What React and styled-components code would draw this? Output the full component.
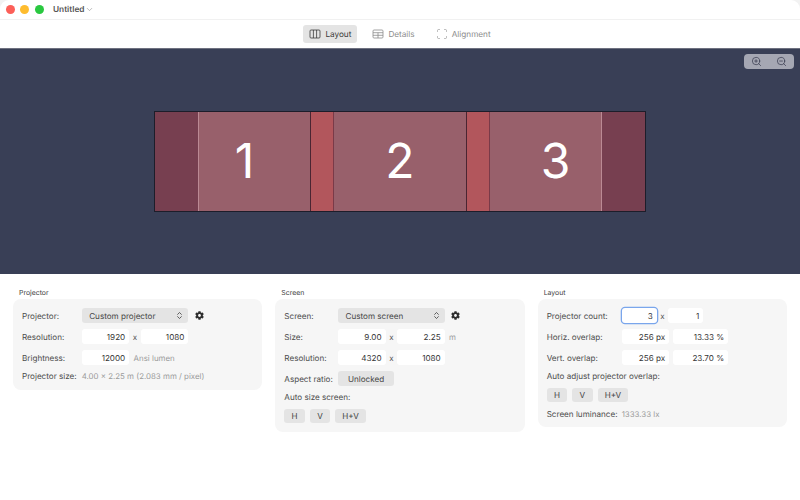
import React from "react";
import styled, { createGlobalStyle } from "styled-components";
import { Scan, ZoomIn, ZoomOut, ChevronDown, ChevronsUpDown } from "lucide-react";
import { FaCog } from "react-icons/fa";

const GlobalStyle = createGlobalStyle`
  html, body {
    margin: 0;
    padding: 0;
    height: 100%;
    background: #f2f2f2;
    font-family: "Inter", "Liberation Sans", sans-serif;
    color: #3a3a3a;
    text-rendering: geometricPrecision;
  }
`;

function ColumnsIcon() {
  return (
    <TabIcon viewBox="0 0 12 10">
      <rect x="1" y="1" width="10" height="8" rx="1" />
      <path d="M4.4 1v8M7.6 1v8" />
    </TabIcon>
  );
}

function TableIcon() {
  return (
    <TabIcon viewBox="0 0 12 10">
      <rect x="1" y="1" width="10" height="8" rx="1" />
      <path d="M1 3.7h10M1 6.3h10M6 3.7v5.3" />
    </TabIcon>
  );
}

export default function App() {
  return (
    <Window>
      <GlobalStyle />
      <TitleBar>
        <Light color="#fc5f58" />
        <Light color="#febc2e" />
        <Light color="#29c840" />
        <DocTitle>Untitled</DocTitle>
        <ChevronDown size={9} color="#8a8a8a" strokeWidth={1.5} />
      </TitleBar>

      <Toolbar>
        <Tab $active>
          <ColumnsIcon />
          Layout
        </Tab>
        <Tab>
          <TableIcon />
          Details
        </Tab>
        <Tab>
          <Scan size={12} strokeWidth={1.2} />
          Alignment
        </Tab>
      </Toolbar>

      <Canvas>
        <ZoomGroup>
          <ZoomIn size={11} strokeWidth={1.5} />
          <ZoomOut size={11} strokeWidth={1.5} />
        </ZoomGroup>
        <Stage>
          <Edge $col={1} />
          <Beam $col={2} $left />
          <Overlap $col={3} />
          <Beam $col={4} />
          <Overlap $col={5} />
          <Beam $col={6} $right />
          <Edge $col={7} />
          <BeamNumber $from={1} $to={4}>1</BeamNumber>
          <BeamNumber $from={3} $to={6}>2</BeamNumber>
          <BeamNumber $from={5} $to={8}>3</BeamNumber>
        </Stage>
      </Canvas>

      <Panels>
        <Section>
          <SectionTitle>Projector</SectionTitle>
          <Card $labelWidth={59.7}>
            <Row>
              <Label>Projector:</Label>
              <Select>
                Custom projector
                <ChevronsUpDown size={9} color="#333" strokeWidth={2} />
              </Select>
              <Gear />
            </Row>
            <Row>
              <Label>Resolution:</Label>
              <Field>1920</Field>
              <Times>x</Times>
              <Field>1080</Field>
            </Row>
            <Row>
              <Label>Brightness:</Label>
              <Field>12000</Field>
              <Unit>Ansi lumen</Unit>
            </Row>
            <InfoRow>
              <Label>Projector size:</Label>
              <Value>4.00 x 2.25 m (2.083 mm / pixel)</Value>
            </InfoRow>
          </Card>
        </Section>

        <Section>
          <SectionTitle>Screen</SectionTitle>
          <Card $labelWidth={53.7}>
            <Row>
              <Label>Screen:</Label>
              <Select>
                Custom screen
                <ChevronsUpDown size={9} color="#333" strokeWidth={2} />
              </Select>
              <Gear />
            </Row>
            <Row>
              <Label>Size:</Label>
              <Field>9.00</Field>
              <Times>x</Times>
              <Field>2.25</Field>
              <Unit>m</Unit>
            </Row>
            <Row>
              <Label>Resolution:</Label>
              <Field>4320</Field>
              <Times>x</Times>
              <Field>1080</Field>
            </Row>
            <Row>
              <Label>Aspect ratio:</Label>
              <Button $wide>Unlocked</Button>
            </Row>
            <InfoRow>
              <Label>Auto size screen:</Label>
            </InfoRow>
            <ButtonRow>
              <Button>H</Button>
              <Button>V</Button>
              <Button>H+V</Button>
            </ButtonRow>
          </Card>
        </Section>

        <Section>
          <SectionTitle>Layout</SectionTitle>
          <Card $labelWidth={75}>
            <Row>
              <Label>Projector count:</Label>
              <Field $focus $small>3</Field>
              <Times>x</Times>
              <Field $small>1</Field>
            </Row>
            <Row>
              <Label>Horiz. overlap:</Label>
              <Field>256 px</Field>
              <Field $large>13.33 %</Field>
            </Row>
            <Row>
              <Label>Vert. overlap:</Label>
              <Field>256 px</Field>
              <Field $large>23.70 %</Field>
            </Row>
            <InfoRow>
              <Label>Auto adjust projector overlap:</Label>
            </InfoRow>
            <ButtonRow>
              <Button>H</Button>
              <Button>V</Button>
              <Button>H+V</Button>
            </ButtonRow>
            <InfoRow>
              <Label>Screen luminance:</Label>
              <Value>1333.33 lx</Value>
            </InfoRow>
          </Card>
        </Section>
      </Panels>
    </Window>
  );
}

const Window = styled.div`
  width: 800px;
  height: 500px;
  display: flex;
  flex-direction: column;
  background: #ffffff;
  border-radius: 9px 9px 0 0;
  overflow: hidden;
`;

const TitleBar = styled.div`
  height: 20px;
  flex: none;
  display: flex;
  align-items: center;
  padding-left: 5.8px;
  box-sizing: border-box;
  border-bottom: 1px solid #f1f1f1;
`;

const Light = styled.span`
  width: 9px;
  height: 9px;
  border-radius: 50%;
  background: ${(props) => props.color};
  margin-right: 5.5px;
`;

const DocTitle = styled.span`
  margin-left: 3.7px;
  margin-right: 1px;
  font-size: 8.3px;
  font-weight: 600;
  color: #555555;
`;

const Toolbar = styled.div`
  height: 28px;
  flex: none;
  display: flex;
  align-items: center;
  justify-content: center;
  gap: 9px;
  box-sizing: border-box;
`;

const Tab = styled.div`
  height: 18px;
  display: flex;
  align-items: center;
  gap: 4px;
  padding: 0 6px;
  border-radius: 3px;
  font-size: 8.2px;
  background: ${(props) => (props.$active ? "#e4e4e4" : "transparent")};
  color: ${(props) => (props.$active ? "#3a3a3a" : "#8c8c8c")};
`;

const TabIcon = styled.svg`
  width: 12px;
  height: 10px;
  fill: none;
  stroke: currentColor;
  stroke-width: 0.8;
`;

const Canvas = styled.div`
  position: relative;
  height: 226px;
  flex: none;
  display: flex;
  align-items: center;
  justify-content: center;
  background: #393f56;
  border-top: 1px solid #6e7180;
  box-sizing: border-box;
`;

const ZoomGroup = styled.div`
  position: absolute;
  top: 5.4px;
  right: 6.3px;
  width: 49.5px;
  height: 15px;
  display: flex;
  align-items: center;
  justify-content: space-around;
  border-radius: 4px;
  background: linear-gradient(90deg, #a5a7b3 49%, #b4b6c1 49%, #b4b6c1 51%, #a5a7b3 51%);
  color: #33364a;
`;

const Stage = styled.div`
  width: 492px;
  height: 101px;
  margin-top: -1px;
  display: grid;
  grid-template-columns: 43px 112px 24px 132px 24px 112px 43px;
  grid-template-rows: 1fr;
  box-sizing: border-box;
  border: 1px solid #1d1d2a;
  & > * {
    grid-row: 1;
  }
`;

const Edge = styled.div`
  grid-column: ${(props) => props.$col};
  background: #773f50;
`;

const Beam = styled.div`
  grid-column: ${(props) => props.$col};
  background: #98606b;
  ${(props) => props.$left && "border-left: 1px solid #bb8a94;"}
  ${(props) => props.$right && "border-right: 1px solid #bb8a94;"}
`;

const Overlap = styled.div`
  grid-column: ${(props) => props.$col};
  background: #b2565c;
  border-left: 1px solid #4a2532;
  border-right: 1px solid #7a3a48;
`;

const BeamNumber = styled.span`
  grid-column: ${(props) => props.$from} / ${(props) => props.$to};
  align-self: center;
  justify-self: center;
  font-size: 48px;
  font-weight: 400;
  line-height: 1;
  color: #ffffff;
`;

const Panels = styled.div`
  flex: 1;
  display: grid;
  grid-template-columns: repeat(3, 1fr);
  align-items: start;
  column-gap: 13px;
  padding: 14px 13px 0;
`;

const Section = styled.div`
  display: flex;
  flex-direction: column;
`;

const SectionTitle = styled.div`
  height: 11px;
  padding-left: 6px;
  font-size: 6.9px;
  line-height: 9px;
  color: #3c3c3c;
`;

const Card = styled.div`
  --label-width: ${(props) => props.$labelWidth}px;
  display: flex;
  flex-direction: column;
  gap: 6.3px;
  padding: 9.3px 9px 8.7px;
  border-radius: 8px;
  background: #f6f6f6;
`;

const Row = styled.div`
  height: 14.7px;
  display: flex;
  align-items: center;
`;

const InfoRow = styled.div`
  height: 12px;
  margin: -1px 0;
  display: flex;
  align-items: center;
  white-space: nowrap;
`;

const ButtonRow = styled.div`
  height: 14.7px;
  display: flex;
  gap: 5px;
`;

const Label = styled.span`
  min-width: var(--label-width);
  flex: none;
  font-size: 8.1px;
  color: #4c4c4c;
  white-space: nowrap;
`;

const Select = styled.div`
  width: 106.7px;
  height: 14.7px;
  flex: none;
  display: flex;
  align-items: center;
  justify-content: space-between;
  box-sizing: border-box;
  padding: 0 4px 0 7.5px;
  border-radius: 3px;
  background: #e4e4e4;
  font-size: 8.1px;
  color: #444444;
`;

const Gear = styled(FaCog)`
  width: 9px;
  height: 9px;
  margin-left: 6.5px;
  color: #2e2e2e;
`;

const Field = styled.div`
  width: ${(props) => (props.$small ? "35px" : props.$large ? "55px" : "47.5px")};
  height: 14.7px;
  flex: none;
  display: flex;
  align-items: center;
  justify-content: flex-end;
  box-sizing: border-box;
  padding-right: 4px;
  border-radius: 3px;
  background: #ffffff;
  font-size: 8.1px;
  color: #333333;
  ${(props) => props.$focus && "box-shadow: 0 0 0 1.3px #7aa6ec;"}
  & + & {
    margin-left: 4px;
  }
`;

const Times = styled.span`
  width: 11.7px;
  flex: none;
  text-align: center;
  font-size: 8px;
  color: #555555;
`;

const Unit = styled.span`
  margin-left: 4.4px;
  font-size: 7.9px;
  color: #9a9a9a;
  white-space: nowrap;
`;

const Value = styled.span`
  font-size: 7.9px;
  color: #9a9a9a;
  white-space: nowrap;
`;

const Button = styled.div`
  height: 14.7px;
  flex: none;
  display: flex;
  align-items: center;
  justify-content: center;
  box-sizing: border-box;
  padding: 0 7px;
  min-width: ${(props) => (props.$wide ? "56px" : "20.5px")};
  border-radius: 3px;
  background: #e4e4e4;
  font-size: 8.1px;
  color: #444444;
`;
